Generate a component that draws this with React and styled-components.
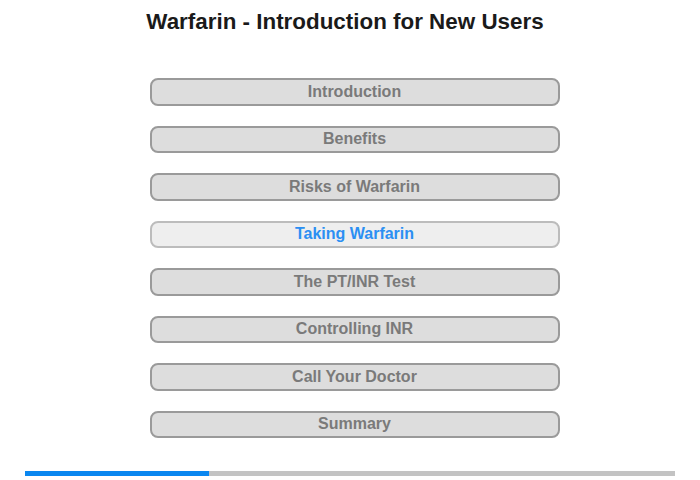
import styled, { createGlobalStyle } from "styled-components";

const GlobalStyle = createGlobalStyle`
    html, body {
        margin: 0;
        padding: 0;
        background: #fff;
        font-family: "Liberation Sans", Arial, sans-serif;
    }
`;

const Page = styled.div`
    width: 700px;
    height: 480px;
    display: flex;
    flex-direction: column;
    align-items: center;
    box-sizing: border-box;
`;

const Title = styled.h1`
    margin: 9px 0 0 -10px;
    font-size: 22.4px;
    line-height: 26px;
    font-weight: 700;
    color: #1a1a1a;
`;

const Menu = styled.nav`
    margin: 43px 0 0 9px;
    display: flex;
    flex-direction: column;
    gap: 20px;
`;

const MenuButton = styled.button`
    width: 410px;
    height: 27.5px;
    box-sizing: border-box;
    border: 2px solid ${(p) => (p.$active ? "#bcbcbc" : "#9a9a9a")};
    border-radius: 8px;
    background: ${(p) => (p.$active ? "#eeeeee" : "#dddddd")};
    color: ${(p) => (p.$active ? "#2b8ff3" : "#7a7a7a")};
    font-family: "Liberation Sans", Arial, sans-serif;
    font-size: 16px;
    font-weight: 700;
    padding: 0;
    cursor: pointer;
`;

const Progress = styled.div`
    margin-top: auto;
    margin-bottom: 4px;
    width: 650px;
    height: 5px;
    background: #c3c3c3;
    display: flex;
`;

const ProgressFill = styled.div`
    height: 100%;
    background: #0a87f0;
`;

const items = [
    "Introduction",
    "Benefits",
    "Risks of Warfarin",
    "Taking Warfarin",
    "The PT/INR Test",
    "Controlling INR",
    "Call Your Doctor",
    "Summary",
];

export default function App() {
    const active = 3;
    return (
        <>
            <GlobalStyle />
            <Page>
                <Title>Warfarin - Introduction for New Users</Title>
                <Menu>
                    {items.map((label, i) => (
                        <MenuButton key={label} $active={i === active}>
                            {label}
                        </MenuButton>
                    ))}
                </Menu>
                <Progress>
                    <ProgressFill style={{ width: `${(184 / 650) * 100}%` }} />
                </Progress>
            </Page>
        </>
    );
}
